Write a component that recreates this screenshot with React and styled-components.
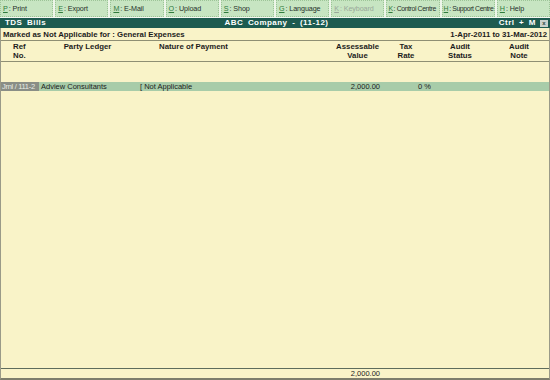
import React from "react";
import styled, { createGlobalStyle } from "styled-components";

const GlobalStyle = createGlobalStyle`
    html, body {
        margin: 0;
        padding: 0;
        background: #f9f3c8;
    }
    body {
        font-family: "Liberation Sans", Arial, sans-serif;
        font-size: 7.5px;
        color: #1c1c1c;
    }
`;

const COLS = "38px 97px 115px 130px 50px 58px 1fr";

export const Screen = styled.div`
    width: 550px;
    height: 380px;
    display: flex;
    flex-direction: column;
    background: #f9f3c8;
    overflow: hidden;
`;

export const Toolbar = styled.div`
    height: 17px;
    display: grid;
    grid-template-columns: repeat(10, 1fr);
    column-gap: 2px;
    background: #eef6ea;
    border-bottom: 1px solid #f4f8f2;
`;

export const ToolButton = styled.div`
    display: flex;
    align-items: center;
    padding-left: ${(props) => (props.tight ? "1px" : "2px")};
    background: #c7e5c2;
    border: 1px dotted #9cc497;
    color: ${(props) => (props.disabled ? "#9aa89a" : "#26302a")};
    font-size: ${(props) => (props.tight ? "6.9px" : "7.2px")};
    letter-spacing: ${(props) => (props.tight ? "-0.4px" : "-0.1px")};
    white-space: nowrap;
    overflow: hidden;

    u {
        color: ${(props) => (props.disabled ? "#9aa89a" : "#2f7a3c")};
        margin-right: 1px;
    }
`;

export const TitleBar = styled.div`
    height: 10px;
    display: grid;
    grid-template-columns: 1fr auto 1fr;
    align-items: center;
    padding: 0 2px 0 5px;
    background: #1d5b50;
    color: #ffffff;
    font-weight: bold;
    font-size: 8px;
    letter-spacing: 0.45px;
    word-spacing: 2px;
    line-height: 10px;
    white-space: pre;
`;

export const TitleRight = styled.div`
    display: flex;
    justify-content: flex-end;
    align-items: center;
    gap: 4px;
`;

export const CloseBox = styled.span`
    width: 8px;
    height: 7px;
    display: flex;
    align-items: center;
    justify-content: center;
    background: #c9d2cc;
    color: #2d4a42;
    font-size: 6px;
    letter-spacing: 0;
    line-height: 7px;
`;

export const Panel = styled.div`
    flex: 1;
    display: flex;
    flex-direction: column;
    border-left: 1px solid #9a9a88;
    border-right: 1px solid #9a9a88;
    border-bottom: 2px solid #7d7d6c;
`;

export const SubHeader = styled.div`
    height: 12px;
    display: flex;
    justify-content: space-between;
    align-items: center;
    padding: 0 2px;
    font-weight: bold;
    font-size: 7.8px;
    border-bottom: 1px solid #8f8f74;
`;

export const HeadRow = styled.div`
    height: 19px;
    display: grid;
    grid-template-columns: ${COLS};
    border-bottom: 1px solid #8f8f74;
    font-weight: bold;
    font-size: 7.8px;
    padding-top: 1px;
    line-height: 9px;
`;

export const HeadCell = styled.div`
    display: flex;
    justify-content: ${(props) =>
        props.align === "left" ? "flex-start" : props.align === "right" ? "flex-end" : "center"};
    padding-left: ${(props) => props.pl || 0}px;
    padding-right: ${(props) => props.pr || 0}px;
    text-align: center;
`;

export const Body = styled.div`
    flex: 1;
    padding-top: 20px;
`;

export const DataRow = styled.div`
    height: 9px;
    display: grid;
    grid-template-columns: ${COLS};
    align-items: center;
    background: #a8cca9;
    line-height: 9px;
`;

export const Cell = styled.div`
    text-align: ${(props) => props.align || "left"};
    padding-left: ${(props) => props.pl || 0}px;
    padding-right: ${(props) => props.pr || 0}px;
    white-space: nowrap;
    overflow: hidden;
`;

export const RefCell = styled(Cell)`
    background: #8a8e86;
    color: #e8ece4;
    padding-left: 1px;
    letter-spacing: -0.3px;
    height: 9px;
`;

export const TotalRow = styled.div`
    height: 9px;
    display: grid;
    grid-template-columns: ${COLS};
    border-top: 1px solid #5f6c5c;
    line-height: 9px;
`;

const buttons = [
    ["P", "Print"],
    ["E", "Export"],
    ["M", "E-Mail"],
    ["O", "Upload"],
    ["S", "Shop"],
    ["G", "Language"],
    ["K", "Keyboard", true],
    ["K", "Control Centre", false, true],
    ["H", "Support Centre", false, true],
    ["H", "Help"],
];

function App() {
    return (
        <Screen>
            <GlobalStyle />
            <Toolbar>
                {buttons.map(([key, label, disabled, tight], i) => (
                    <ToolButton key={i} disabled={disabled} tight={tight}>
                        <u>{key}</u>: {label}
                    </ToolButton>
                ))}
            </Toolbar>
            <TitleBar>
                <span>TDS Bills</span>
                <span>ABC Company - (11-12)</span>
                <TitleRight>
                    <span>Ctrl + M</span>
                    <CloseBox>x</CloseBox>
                </TitleRight>
            </TitleBar>
            <Panel>
                <SubHeader>
                    <span>Marked as Not Applicable for : General Expenses</span>
                    <span>1-Apr-2011 to 31-Mar-2012</span>
                </SubHeader>
                <HeadRow>
                    <HeadCell align="left" pl={12}>Ref<br />No.</HeadCell>
                    <HeadCell>Party Ledger</HeadCell>
                    <HeadCell>Nature of Payment</HeadCell>
                    <HeadCell align="right" pr={2}>Assessable<br />Value</HeadCell>
                    <HeadCell>Tax<br />Rate</HeadCell>
                    <HeadCell>Audit<br />Status</HeadCell>
                    <HeadCell>Audit<br />Note</HeadCell>
                </HeadRow>
                <Body>
                    <DataRow>
                        <RefCell>Jrnl / 111-2</RefCell>
                        <Cell pl={2}>Adview Consultants</Cell>
                        <Cell pl={4}>[ Not Applicable</Cell>
                        <Cell align="right" pr={1}>2,000.00</Cell>
                        <Cell align="right">0 %</Cell>
                        <Cell />
                        <Cell />
                    </DataRow>
                </Body>
                <TotalRow>
                    <Cell />
                    <Cell />
                    <Cell />
                    <Cell align="right" pr={1}>2,000.00</Cell>
                    <Cell />
                    <Cell />
                    <Cell />
                </TotalRow>
            </Panel>
        </Screen>
    );
}

export default App;
